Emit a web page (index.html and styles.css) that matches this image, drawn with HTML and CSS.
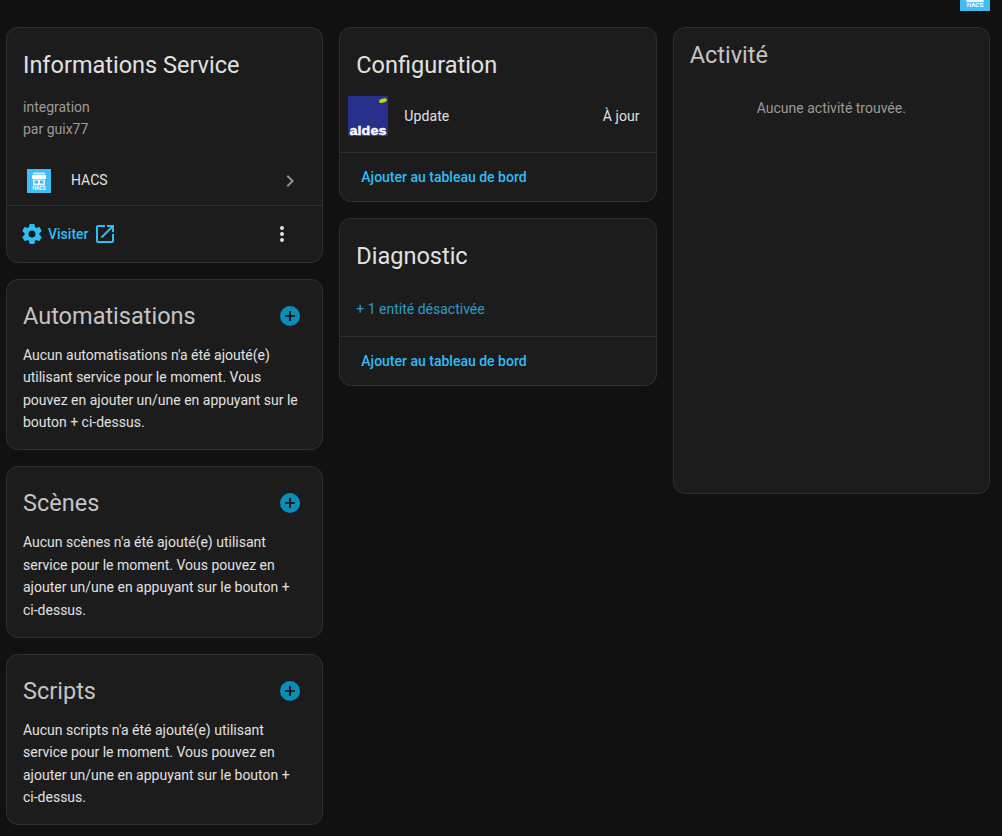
FILE: index.html
```html
<!doctype html>
<html lang="fr">
  <head>
    <meta charset="UTF-8" />
    <meta name="viewport" content="width=device-width, initial-scale=1.0" />
    <title>Informations Service</title>
    <link rel="stylesheet" href="styles.css">
  </head>
  <body>
    <header class="topbar">
      <svg class="hacs-top" viewBox="0 0 24 24">
        <rect width="24" height="24" fill="#41bdf5" />
        <path d="M5 10h14v7H5z M7 11v4h4v-4z M13 11v4h4v-4z" fill="#e6f6fd" fill-rule="evenodd" />
        <text x="12" y="21" class="hacs-label" font-size="5">HACS</text>
      </svg>
    </header>

    <main class="columns">
      <div class="column">
        <section class="card">
          <h2 class="title">Informations Service</h2>
          <div class="meta">
            <div>integration</div>
            <div>par guix77</div>
          </div>
          <div class="device-row">
            <svg class="hacs-logo" viewBox="0 0 24 24">
              <rect width="24" height="24" fill="#41bdf5" />
              <path d="M6 3.500h12v2H6z" fill="#cfeefc" />
              <path d="M5 6h14v4H5z" fill="#ffffff" />
              <path d="M6 10.500h12v6H6z M7.500 11.500v3h3.500v-3z M13 11.500v3h3.500v-3z" fill="#e6f6fd" fill-rule="evenodd" />
              <text x="12" y="21" class="hacs-label" font-size="5">HACS</text>
            </svg>
            <span class="device-name">HACS</span>
            <svg class="chevron" viewBox="0 0 24 24"><path d="M8.59,16.58L13.17,12L8.59,7.41L10,6L16,12L10,18L8.59,16.58Z" /></svg>
          </div>
          <div class="actions">
            <svg class="icon" viewBox="0 0 24 24"><path d="M12,15.5A3.5,3.5 0 0,1 8.5,12A3.5,3.5 0 0,1 12,8.5A3.5,3.5 0 0,1 15.5,12A3.5,3.5 0 0,1 12,15.5M19.43,12.97C19.47,12.65 19.5,12.33 19.5,12C19.5,11.67 19.47,11.34 19.43,11L21.54,9.37C21.73,9.22 21.78,8.95 21.66,8.73L19.66,5.27C19.54,5.05 19.27,4.96 19.05,5.05L16.56,6.05C16.04,5.66 15.5,5.32 14.87,5.07L14.5,2.42C14.46,2.18 14.25,2 14,2H10C9.75,2 9.54,2.18 9.5,2.42L9.13,5.07C8.5,5.32 7.96,5.66 7.44,6.05L4.95,5.05C4.73,4.96 4.46,5.05 4.34,5.27L2.34,8.73C2.21,8.95 2.27,9.22 2.46,9.37L4.57,11C4.53,11.34 4.5,11.67 4.5,12C4.5,12.33 4.53,12.65 4.57,12.97L2.46,14.63C2.27,14.78 2.21,15.05 2.34,15.27L4.34,18.73C4.46,18.95 4.73,19.03 4.95,18.95L7.44,17.94C7.96,18.34 8.5,18.68 9.13,18.93L9.5,21.58C9.54,21.82 9.75,22 10,22H14C14.25,22 14.46,21.82 14.5,21.58L14.87,18.93C15.5,18.67 16.04,18.34 16.56,17.94L19.05,18.95C19.27,19.03 19.54,18.95 19.66,18.73L21.66,15.27C21.78,15.05 21.73,14.78 21.54,14.63L19.43,12.97Z" /></svg>
            <span class="link visit">Visiter</span>
            <svg class="icon" viewBox="0 0 24 24"><path d="M14,3V5H17.59L7.76,14.83L9.17,16.24L19,6.41V10H21V3M19,19H5V5H12V3H5C3.89,3 3,3.9 3,5V19A2,2 0 0,0 5,21H19A2,2 0 0,0 21,19V12H19V19Z" /></svg>
            <svg class="dots" viewBox="0 0 24 24"><path d="M12,16A2,2 0 0,1 14,18A2,2 0 0,1 12,20A2,2 0 0,1 10,18A2,2 0 0,1 12,16M12,10A2,2 0 0,1 14,12A2,2 0 0,1 12,14A2,2 0 0,1 10,12A2,2 0 0,1 12,10M12,4A2,2 0 0,1 14,6A2,2 0 0,1 12,8A2,2 0 0,1 10,6A2,2 0 0,1 12,4Z" /></svg>
          </div>
        </section>

        <section class="card">
          <div class="head">
            <h2 class="title dim">Automatisations</h2>
            <svg class="plus" viewBox="0 0 24 24"><path d="M17,13H13V17H11V13H7V11H11V7H13V11H17M12,2A10,10 0 0,0 2,12A10,10 0 0,0 12,22A10,10 0 0,0 22,12A10,10 0 0,0 12,2Z" /></svg>
          </div>
          <p class="empty">Aucun automatisations n'a été ajouté(e) utilisant service pour le moment. Vous pouvez en ajouter un/une en appuyant sur le bouton + ci-dessus.</p>
        </section>

        <section class="card">
          <div class="head">
            <h2 class="title dim">Scènes</h2>
            <svg class="plus" viewBox="0 0 24 24"><path d="M17,13H13V17H11V13H7V11H11V7H13V11H17M12,2A10,10 0 0,0 2,12A10,10 0 0,0 12,22A10,10 0 0,0 22,12A10,10 0 0,0 12,2Z" /></svg>
          </div>
          <p class="empty">Aucun scènes n'a été ajouté(e) utilisant service pour le moment. Vous pouvez en ajouter un/une en appuyant sur le bouton + ci-dessus.</p>
        </section>

        <section class="card">
          <div class="head">
            <h2 class="title dim">Scripts</h2>
            <svg class="plus" viewBox="0 0 24 24"><path d="M17,13H13V17H11V13H7V11H11V7H13V11H17M12,2A10,10 0 0,0 2,12A10,10 0 0,0 12,22A10,10 0 0,0 22,12A10,10 0 0,0 12,2Z" /></svg>
          </div>
          <p class="empty">Aucun scripts n'a été ajouté(e) utilisant service pour le moment. Vous pouvez en ajouter un/une en appuyant sur le bouton + ci-dessus.</p>
        </section>
      </div>

      <div class="column">
        <section class="card">
          <h2 class="title">Configuration</h2>
          <div class="entity-row">
            <svg class="aldes-logo" viewBox="0 0 40 40">
              <rect width="40" height="40" fill="#28308c" />
              <ellipse cx="35" cy="4.600" rx="4" ry="2" transform="rotate(-15 35 4.600)" fill="#c4d600" />
              <text x="20" y="38.500" class="aldes-label" textLength="37" lengthAdjust="spacingAndGlyphs">aldes</text>
            </svg>
            <span class="entity-name">Update</span>
            <span class="entity-state">À jour</span>
          </div>
          <div class="footer"><span class="link">Ajouter au tableau de bord</span></div>
        </section>

        <section class="card">
          <h2 class="title">Diagnostic</h2>
          <div class="disabled">+ 1 entité désactivée</div>
          <div class="footer"><span class="link">Ajouter au tableau de bord</span></div>
        </section>
      </div>

      <div class="column">
        <section class="card activity">
          <h2 class="title dim">Activité</h2>
          <p class="no-activity">Aucune activité trouvée.</p>
        </section>
      </div>
    </main>
  </body>
</html>
```

FILE: styles.css
```css
body {
  margin: 0;
  padding: 0;
  height: 836px;
  overflow: hidden;
  background-color: #111111;
  color: #e1e1e1;
  font-family: Roboto, "Liberation Sans", sans-serif;
  font-size: 14px;
}

.topbar {
  display: flex;
  justify-content: flex-end;
  align-items: flex-end;
  height: 11px;
  padding-right: 12px;
  overflow: hidden;
}

.hacs-top {
  flex: none;
  width: 30px;
  height: 30px;
}

.hacs-label {
  fill: #ffffff;
  font-family: Roboto, sans-serif;
  font-weight: 700;
  text-anchor: middle;
}

.columns {
  display: flex;
  gap: 16px;
  padding: 16px 12px 0 6px;
}

.column {
  display: flex;
  flex-direction: column;
  gap: 16px;
  flex: 1 1 0;
  min-width: 0;
}

.card {
  background-color: #1c1c1c;
  border: 1px solid #2f2f2f;
  border-radius: 12px;
}

.title {
  margin: 0;
  padding: 21px 16px 0;
  font-size: 23.5px;
  font-weight: 400;
  line-height: 32px;
  color: #e1e1e1;
}

.title.dim {
  color: #c4c4c4;
}

.meta {
  padding: 15px 16px 0;
  line-height: 22px;
  color: #9b9b9b;
}

.device-row {
  display: flex;
  align-items: center;
  height: 48px;
  margin-top: 16px;
  padding: 0 20px 1px;
  border-bottom: 1px solid #2f2f2f;
}

.hacs-logo {
  width: 24px;
  height: 24px;
  margin: 2px 20px 0 0;
}

.device-name {
  flex: 1;
}

.chevron {
  width: 24px;
  height: 24px;
  margin-top: 2px;
  fill: #8f8f8f;
}

.actions {
  display: flex;
  align-items: center;
  height: 56px;
  padding: 0 28px 0 13px;
}

.icon {
  width: 24px;
  height: 24px;
  fill: #2fbdf5;
}

.link {
  color: #2fbdf5;
  font-weight: 500;
}

.visit {
  margin: 0 4px 0 4px;
}

.dots {
  width: 24px;
  height: 24px;
  margin-left: auto;
  fill: #e1e1e1;
}

.head {
  display: flex;
  justify-content: space-between;
  align-items: flex-start;
  padding-right: 20px;
}

.head .title {
  padding-top: 20px;
}

.plus {
  flex: none;
  width: 24px;
  height: 24px;
  margin-top: 24px;
  fill: #0a8db8;
}

.empty {
  margin: 0;
  padding: 12px 16px 15.8px;
  line-height: 22.4px;
  color: #e1e1e1;
}

.entity-row {
  display: flex;
  align-items: center;
  padding: 0 16px 0 8px;
  height: 56px;
  margin: 7px 0 8px;
  letter-spacing: 0.1px;
}

.aldes-logo {
  width: 40px;
  height: 40px;
  margin-right: 16px;
}

.aldes-label {
  fill: #ffffff;
  stroke: #ffffff;
  stroke-width: 0.4px;
  font-family: "Liberation Sans", sans-serif;
  font-size: 13px;
  font-weight: 700;
  text-anchor: middle;
}

.entity-name {
  flex: 1;
}

.footer {
  display: flex;
  align-items: center;
  height: 48px;
  padding: 0 21px;
  border-top: 1px solid #2f2f2f;
}

.disabled {
  padding: 27px 16px 17px;
  line-height: 20px;
  color: #2a9cc8;
}

.activity {
  height: 467px;
  box-sizing: border-box;
}

.activity .title {
  padding-top: 11px;
}

.no-activity {
  margin: 0;
  padding-top: 26px;
  text-align: center;
  line-height: 22px;
  color: #9b9b9b;
}
```
